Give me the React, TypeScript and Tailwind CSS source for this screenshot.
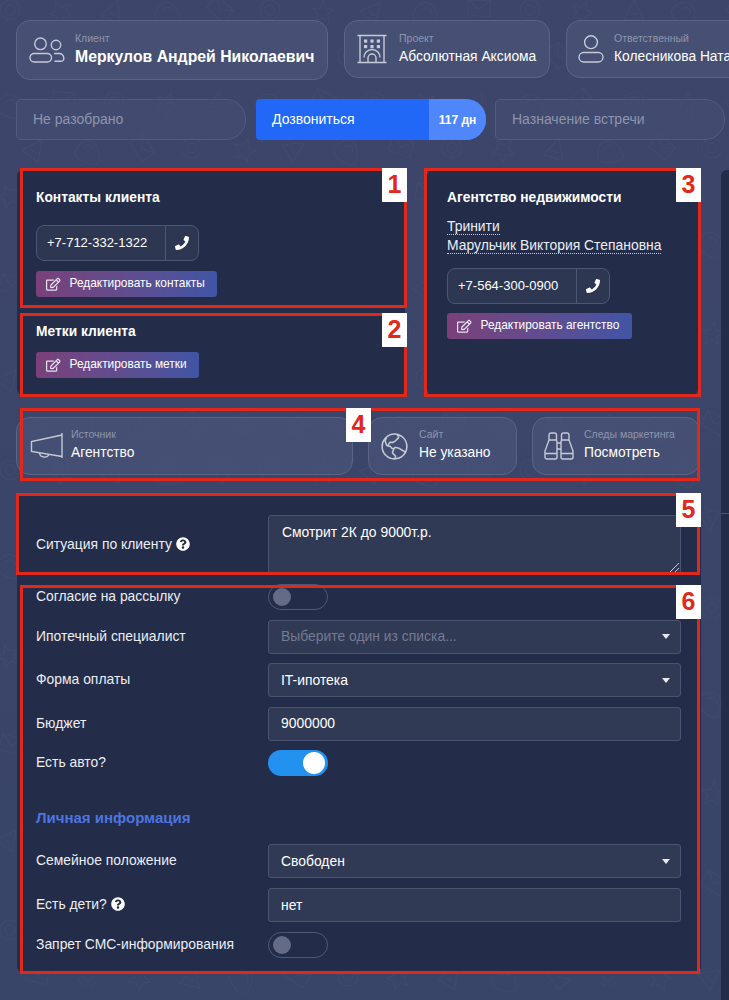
import React from "react";
import { FaPhone, FaRegEdit, FaQuestionCircle } from "react-icons/fa";
import { PiGlobeHemisphereWestLight } from "react-icons/pi";

const font = "font-['Liberation_Sans','Arial',sans-serif]";

function Doodles() {
  const items: React.ReactNode[] = [];
  const shapes = [
    "M0 10 a10 10 0 1 0 20 0 a10 10 0 1 0 -20 0 M5 10 a5 5 0 1 0 10 0 a5 5 0 1 0 -10 0",
    "M0 20 L10 0 L20 20 Z M6 14 L14 14",
    "M0 0 h22 v16 h-22 Z M0 0 L11 9 L22 0",
    "M11 0 L14 8 L22 9 L16 14 L18 22 L11 18 L4 22 L6 14 L0 9 L8 8 Z",
    "M0 12 C4 0 14 0 20 8 S30 22 16 24 S-2 22 0 12 M6 12 C8 6 14 6 16 10",
  ];
  for (let y = 0; y < 1000; y += 46) {
    for (let x = 0; x < 729; x += 52) {
      const i = (Math.floor(x / 52) * 3 + Math.floor(y / 46) * 2) % shapes.length;
      const ox = x + ((y / 46) % 2) * 26;
      items.push(
        <path key={`${x}-${y}`} d={shapes[i]} transform={`translate(${ox} ${y}) rotate(${(i * 37 + x) % 60} 10 10)`} />
      );
    }
  }
  return (
    <svg className="absolute inset-0" width="729" height="1000" fill="none" stroke="#ffffff" strokeOpacity="0.03" strokeWidth="1">
      {items}
    </svg>
  );
}

function UsersIcon() {
  return (
    <svg width="36" height="26" viewBox="0 0 36 26" fill="none" stroke="#c6cad6" strokeWidth="1.4">
      <circle cx="11.5" cy="6.8" r="5.8" />
      <circle cx="27" cy="8" r="4.7" />
      <rect x="1" y="16.5" width="21.5" height="8.5" rx="4.2" />
      <path d="M25 16.5 H30 A4.5 4.5 0 0 1 34.8 21 V21.5 A2.5 2.5 0 0 1 32.3 24.2 H25.5" />
    </svg>
  );
}

function BuildingIcon() {
  return (
    <svg width="30" height="30" viewBox="0 0 30 30" fill="none" stroke="#c6cad6" strokeWidth="1.4">
      <path d="M0.5 1.5 H29.5 M3 1.5 V28.5 M27 1.5 V28.5 M0.5 28.5 H29.5" />
      <g fill="#c6cad6" stroke="none">
        <rect x="7" y="5.5" width="3.2" height="3.2" /><rect x="13.4" y="5.5" width="3.2" height="3.2" /><rect x="19.8" y="5.5" width="3.2" height="3.2" />
        <rect x="7" y="11" width="3.2" height="3.2" /><rect x="13.4" y="11" width="3.2" height="3.2" /><rect x="19.8" y="11" width="3.2" height="3.2" />
      </g>
      <path d="M7 23.5 A8 8 0 0 1 23 23.5 M11 28.5 V24 A4 4 0 0 1 19 24 V28.5" />
    </svg>
  );
}

function UserIcon() {
  return (
    <svg width="26" height="28" viewBox="0 0 26 28" fill="none" stroke="#c6cad6" strokeWidth="1.4">
      <circle cx="13" cy="7.2" r="6.4" />
      <rect x="1" y="17.5" width="24" height="9.5" rx="4.7" />
    </svg>
  );
}

function MegaphoneIcon() {
  return (
    <svg width="34" height="28" viewBox="0 0 34 28" fill="none" stroke="#c6cad6" strokeWidth="1.4">
      <path d="M32 1 V26 M32 3 L1.5 9.5 V19.5 L32 24.5" />
      <path d="M9.5 21 A5 4.5 0 0 0 19 22.5" />
    </svg>
  );
}

function BinocularsIcon() {
  return (
    <svg width="30" height="28" viewBox="0 0 30 28" fill="none" stroke="#c6cad6" strokeWidth="1.4">
      <path d="M5 8 V3 A2 2 0 0 1 7 1 H10.5 A2 2 0 0 1 12.5 3 V8 L13 10 V25 A2 2 0 0 1 11 27 H3 A2 2 0 0 1 1 25 V19 Z" />
      <path d="M25 8 V3 A2 2 0 0 0 23 1 H19.5 A2 2 0 0 0 17.5 3 V8 L17 10 V25 A2 2 0 0 0 19 27 H27 A2 2 0 0 0 29 25 V19 Z" />
      <path d="M1 21.5 H13 M17 21.5 H29 M13 11 H17 M13 17 H17 M5 8 H12.5 M17.5 8 H25" />
    </svg>
  );
}

function InfoCard({ icon, label, value, bold, className, gap, textClass = "" }: { icon: React.ReactNode; label: string; value: string; bold?: boolean; className: string; gap: string; textClass?: string }) {
  return (
    <div className={`flex shrink-0 items-center rounded-[14px] border border-[#5a6485] bg-[#4a5478]/70 ${className}`}>
      <div className={`flex shrink-0 justify-center ${gap}`}>{icon}</div>
      <div className={`min-w-0 whitespace-nowrap ${textClass}`}>
        <div className="text-[10.5px] leading-[13px] text-[#8e95ad]">{label}</div>
        <div className={`mt-[2px] leading-[20px] text-white ${bold ? "text-[15.8px] font-bold" : "text-[13.8px]"}`}>{value}</div>
      </div>
    </div>
  );
}

function Status({ text, className }: { text: string; className: string }) {
  return (
    <div className={`flex h-[41px] items-center rounded-l-[5px] rounded-r-[20px] border border-[#515b7c] bg-[#465073]/50 pl-4 text-[14px] text-[#8e95ad] ${className}`}>{text}</div>
  );
}

function PhoneBox({ phone, width }: { phone: string; width: string }) {
  return (
    <div className={`flex h-[36px] items-center rounded-[8px] border border-[#4c5675] bg-[#2e3751] ${width}`}>
      <div className="flex h-full flex-1 items-center pl-[10px] text-[13px] text-white">{phone}</div>
      <div className="flex h-full w-[33px] items-center justify-center border-l border-[#4c5675]">
        <FaPhone className="text-[14px] text-white" />
      </div>
    </div>
  );
}

function EditButton({ text, width }: { text: string; width: string }) {
  return (
    <div className={`flex h-[26px] items-center rounded-[3px] bg-gradient-to-r from-[#7a4079] to-[#3f55a5] pl-[10px] text-[11.9px] text-white ${width}`}>
      <FaRegEdit className="mr-[9px] text-[14.5px] text-[#e3e4ee]" />
      {text}
    </div>
  );
}

function Toggle({ on }: { on?: boolean }) {
  return on ? (
    <div className="flex h-[26px] w-[60px] items-center justify-end rounded-full bg-[#2391f0] pr-[3px]">
      <div className="h-[22px] w-[22px] rounded-full bg-white" />
    </div>
  ) : (
    <div className="flex h-[26px] w-[60px] items-center rounded-full border border-[#4f5976] pl-[4px]">
      <div className="h-[18px] w-[18px] rounded-full bg-[#636b87]" />
    </div>
  );
}

function Field({ text, select, muted }: { text: string; select?: boolean; muted?: boolean }) {
  return (
    <div className={`flex h-[34px] w-[413px] items-center justify-between rounded-[3px] border border-[#4a5472] bg-[#313a54] pl-[12px] pr-[10px] text-[13.9px] ${muted ? "text-[#737a92]" : "text-white"}`}>
      {text}
      {select && (
        <svg width="8" height="5" viewBox="0 0 8 5"><path d="M0 0 H8 L4 5 Z" fill="#e8eaf0" /></svg>
      )}
    </div>
  );
}

function Row({ label, help, children }: { label: string; help?: boolean; children: React.ReactNode }) {
  return (
    <div className="flex items-center">
      <div className="flex w-[232px] shrink-0 items-center gap-[4px] pb-[1px] text-[13.9px] text-[#eceef4]">
        {label}
        {help && <FaQuestionCircle className="text-[14px] text-white" />}
      </div>
      {children}
    </div>
  );
}

function Frame({ n, className, badge }: { n: number; className: string; badge: string }) {
  return (
    <div className={`pointer-events-none absolute border-[3px] border-[#e2281b] ${className}`}>
      <div className={`absolute top-[-3px] right-[-3px] flex h-[34px] w-[25px] items-center justify-center bg-white text-[25px] font-bold text-[#e2281b] ${badge}`}>{n}</div>
    </div>
  );
}

export default function App() {
  return (
    <div className={`relative h-[1000px] w-[729px] overflow-hidden bg-gradient-to-b from-[#3d466a] to-[#394469] ${font}`}>
      <Doodles />
      <div className="relative flex flex-col">
        <div className="flex gap-4 pl-4 pt-5">
          <InfoCard icon={<UsersIcon />} label="Клиент" value="Меркулов Андрей Николаевич" bold className="h-[60px] w-[312px]" gap="w-[58px] pl-[2px]" textClass="pb-[2px]" />
          <InfoCard icon={<BuildingIcon />} label="Проект" value="Абсолютная Аксиома" className="h-[58px] w-[206px]" gap="w-[54px]" />
          <InfoCard icon={<UserIcon />} label="Ответственный" value="Колесникова Наталья" className="h-[58px] w-[220px]" gap="w-[47px]" />
        </div>

        <div className="mt-[19px] flex pl-4">
          <Status text="Не разобрано" className="w-[230px]" />
          <div className="ml-[10px] flex h-[41px] w-[230px] overflow-hidden rounded-l-[4px] rounded-r-[20px] bg-[#2168f6] text-white">
            <div className="flex flex-1 items-center pl-4 text-[14px]">Дозвониться</div>
            <div className="flex w-[57px] items-center justify-center bg-[#4f87fa] text-[12px] font-bold">117 дн</div>
          </div>
          <Status text="Назначение встречи" className="ml-[9px] w-[230px]" />
        </div>

        <div className="mt-[30px] flex">
          <div className="ml-[17px] w-[684px] shrink-0">
            <div className="flex">
              <div className="h-[225px] w-[388px] rounded-[6px] bg-[#232c48] pl-[19px]">
                <div className="pt-[20px] text-[13.8px] font-bold leading-[16px] text-white">Контакты клиента</div>
                <div className="mt-[19px]"><PhoneBox phone="+7-712-332-1322" width="w-[163px]" /></div>
                <div className="mt-[10px]"><EditButton text="Редактировать контакты" width="w-[181px]" /></div>
                <div className="mt-[27px] text-[13.8px] font-bold leading-[16px] text-white">Метки клиента</div>
                <div className="mt-[12px]"><EditButton text="Редактировать метки" width="w-[163px]" /></div>
              </div>
              <div className="ml-[22px] h-[225px] w-[271px] rounded-[6px] bg-[#232c48] pl-[20px]">
                <div className="pt-[20px] text-[13.8px] font-bold leading-[16px] text-white">Агентство недвижимости</div>
                <div className="mt-[11px] text-[13.9px] leading-[19px] text-[#eceef4]">
                  <div><span className="border-b border-dotted border-[#c6cad6]">Тринити</span></div>
                  <div><span className="border-b border-dotted border-[#c6cad6]">Марульчик Виктория Степановна</span></div>
                </div>
                <div className="mt-[13px]"><PhoneBox phone="+7-564-300-0900" width="w-[163px]" /></div>
                <div className="mt-[9px]"><EditButton text="Редактировать агентство" width="w-[185px]" /></div>
              </div>
            </div>

            <div className="mt-[22px] flex">
              <InfoCard icon={<MegaphoneIcon />} label="Источник" value="Агентство" className="-ml-px h-[58px] w-[337px]" gap="w-[54px] pl-[6px]" textClass="pb-[1px]" />
              <InfoCard icon={<PiGlobeHemisphereWestLight className="text-[33px] text-[#c6cad6]" />} label="Сайт" value="Не указано" className="ml-[15px] h-[58px] w-[149px]" gap="w-[50px]" textClass="pb-[1px]" />
              <InfoCard icon={<BinocularsIcon />} label="Следы маркетинга" value="Посмотреть" className="ml-[15px] h-[58px] w-[168px]" gap="w-[51px]" textClass="pb-[1px]" />
            </div>

            <div className="mt-[20px] h-[477px] rounded-[6px] bg-[#232c48] pl-[19px] pt-[20px]">
              <Row label="Ситуация по клиенту" help>
                <div className="relative h-[59px] w-[413px] rounded-[3px] border border-[#4a5472] bg-[#313a54] pl-[13px] pt-[6px] text-[13.9px] text-white">
                  Смотрит 2К до 9000т.р.
                  <svg className="absolute bottom-[1px] right-[1px]" width="10" height="10" viewBox="0 0 10 10" stroke="#c6cad6" strokeWidth="1"><path d="M1 10 L10 1 M6 10 L10 6" /></svg>
                </div>
              </Row>
              <div className="mt-[10px] flex flex-col gap-[9.6px]">
                <Row label="Согласие на рассылку"><Toggle /></Row>
                <Row label="Ипотечный специалист"><Field text="Выберите один из списка..." select muted /></Row>
                <Row label="Форма оплаты"><Field text="IT-ипотека" select /></Row>
                <Row label="Бюджет"><Field text="9000000" /></Row>
                <Row label="Есть авто?"><Toggle on /></Row>
              </div>
              <div className="mt-[33px] text-[15px] font-bold leading-[18px] text-[#4e74e0]">Личная информация</div>
              <div className="mt-[17px] flex flex-col gap-[9.6px]">
                <Row label="Семейное положение"><Field text="Свободен" select /></Row>
                <Row label="Есть дети?" help><Field text="нет" /></Row>
                <Row label="Запрет СМС-информирования"><Toggle /></Row>
              </div>
            </div>
          </div>

          <div className="ml-[20px] flex h-[830px] flex-1 flex-col rounded-tl-[6px] bg-[#232c48]">
            <div className="mt-[343px] border-t border-[#4a5472]" />
          </div>
        </div>
      </div>

      <Frame n={1} className="left-[20px] top-[168px] h-[140px] w-[387px]" badge="" />
      <Frame n={2} className="left-[20px] top-[313px] h-[84px] w-[387px]" badge="" />
      <Frame n={3} className="left-[424px] top-[168px] h-[229px] w-[277px]" badge="" />
      <Frame n={4} className="left-[20px] top-[408px] h-[73px] w-[680px]" badge="right-[326px]" />
      <Frame n={5} className="left-[16px] top-[493px] h-[82px] w-[684px]" badge="right-[-4px]" />
      <Frame n={6} className="left-[20px] top-[585px] h-[389px] w-[680px]" badge="right-[-4px]" />
    </div>
  );
}
